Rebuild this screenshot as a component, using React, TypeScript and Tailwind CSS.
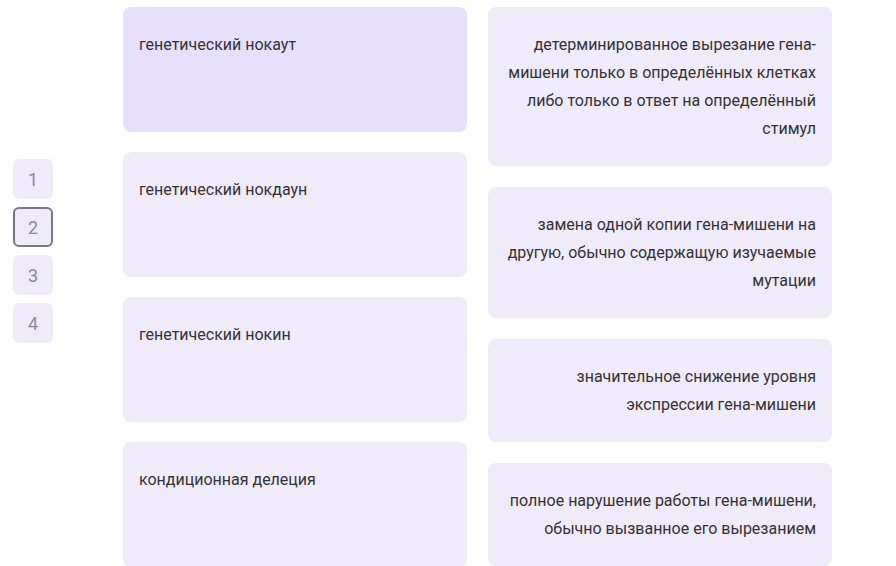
export default function App() {
  const terms = [
    { text: "генетический нокаут", active: true },
    { text: "генетический нокдаун", active: false },
    { text: "генетический нокин", active: false },
    { text: "кондиционная делеция", active: false },
  ];

  const definitions = [
    "детерминированное вырезание гена-мишени только в определённых клетках либо только в ответ на определённый стимул",
    "замена одной копии гена-мишени на другую, обычно содержащую изучаемые мутации",
    "значительное снижение уровня экспрессии гена-мишени",
    "полное нарушение работы гена-мишени, обычно вызванное его вырезанием",
  ];

  const steps = [1, 2, 3, 4];

  return (
    <div
      className="w-[896px] h-[566px] overflow-hidden bg-white flex items-start"
      style={{ fontFamily: "Roboto, 'Noto Sans', sans-serif" }}
    >
      {/* step switcher */}
      <div className="ml-[13px] mt-[159px] flex flex-col gap-2">
        {steps.map((n) => (
          <button
            key={n}
            className={`w-10 h-10 rounded-md bg-[#efebf9] text-[18px] text-[#8b8797] flex items-center justify-center ${
              n === 2 ? "border-2 border-[#7b7786]" : ""
            }`}
          >
            {n}
          </button>
        ))}
      </div>

      {/* matching columns */}
      <div className="ml-[70px] mt-[7px] flex gap-[21px] items-start">
        <div className="w-[344px] flex flex-col gap-5">
          {terms.map((t, idx) => (
            <div
              key={idx}
              className={`h-[125px] rounded-lg px-4 pt-6 text-[16px] leading-[28px] text-[#333333] ${
                t.active ? "bg-[#e7e0fc]" : "bg-[#efebf9]"
              }`}
            >
              {t.text}
            </div>
          ))}
        </div>

        <div className="w-[344px] flex flex-col gap-[21px]">
          {definitions.map((d, idx) => (
            <div
              key={idx}
              className="rounded-lg bg-[#efebf9] px-4 pt-6 pb-[23px] text-right text-[16px] leading-[28px] text-[#333333]"
            >
              {d}
            </div>
          ))}
        </div>
      </div>
    </div>
  );
}
